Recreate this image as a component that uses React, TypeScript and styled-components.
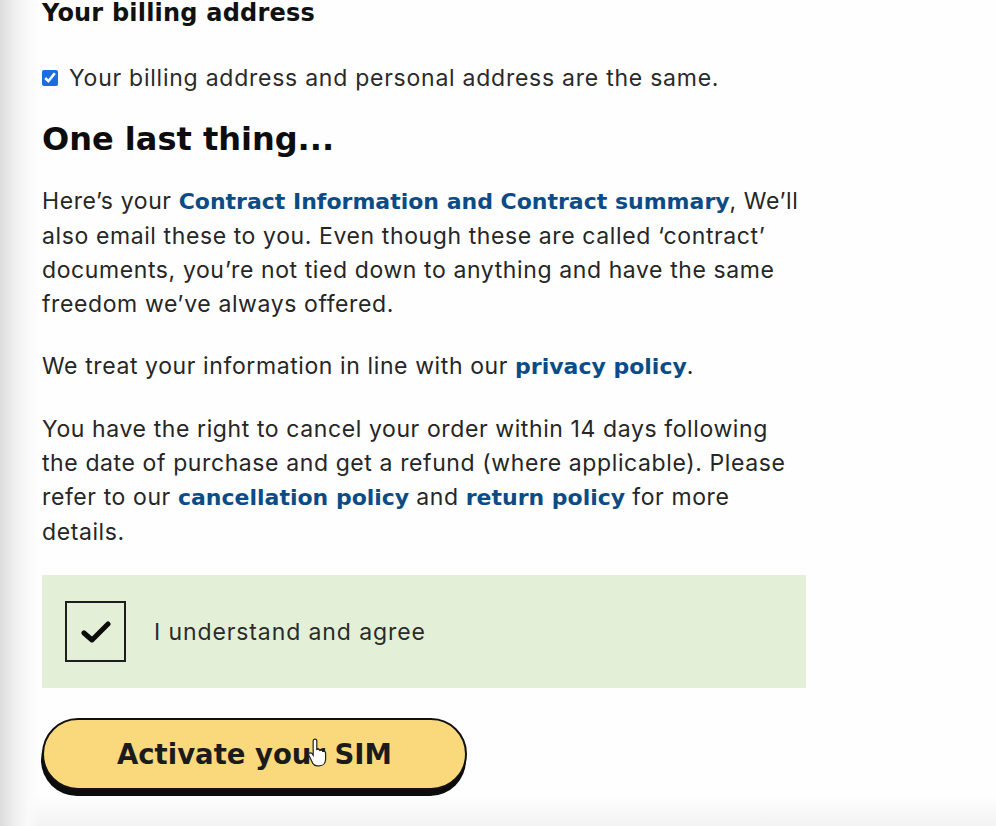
import { styled, createGlobalStyle } from 'styled-components';

const Global = createGlobalStyle`
    html, body {
        margin: 0;
        padding: 0;
    }
    body {
        font-family: Inter, 'Liberation Sans', sans-serif;
        color: #222;
        background: #fdfefd;
    }
`;

const heavy = `'DejaVu Sans', Inter, sans-serif`;

const S = {
    Page: styled.div`
        min-height: 826px;
        box-sizing: border-box;
        background:
            linear-gradient(to right, #dcdcdc 0, #eeeeee 14px, #fafafa 28px, rgba(253, 254, 253, 0) 40px),
            linear-gradient(to bottom, rgba(253, 254, 253, 0) 795px, #f3f3f3 826px),
            #fdfefd;
        padding-left: 42px;
    `,
    Column: styled.div`
        width: 764px;
        display: flex;
        flex-direction: column;
    `,
    SubHeading: styled.h3`
        margin: 0;
        font-family: ${heavy};
        font-size: 24px;
        letter-spacing: 0.2px;
        line-height: 26px;
        font-weight: 700;
        color: #111;
    `,
    SameRow: styled.label`
        margin-top: 35px;
        display: flex;
        align-items: center;
        gap: 11px;
        font-size: 23px;
        letter-spacing: 0.75px;
        line-height: 34px;
        color: #2a2a2a;

        input {
            margin: 0;
            width: 16px;
            height: 16px;
            accent-color: #1b6ee0;
        }
    `,
    Heading: styled.h2`
        margin: 24px 0 0;
        font-family: ${heavy};
        font-size: 32px;
        line-height: 40px;
        font-weight: 700;
        color: #0d0d0d;
    `,
    Para: styled.p<{ $gap: number }>`
        margin: ${(p) => p.$gap}px 0 0;
        font-size: 23px;
        letter-spacing: 0.6px;
        line-height: 34px;
        color: #262626;
    `,
    Link: styled.a`
        font-family: ${heavy};
        font-size: 22px;
        letter-spacing: 0;
        color: #0b4c86;
        font-weight: 700;
        text-decoration: none;
    `,
    AgreeBox: styled.label`
        margin-top: 26px;
        height: 113px;
        box-sizing: border-box;
        background: #e3f0d7;
        display: flex;
        align-items: center;
        padding-left: 23px;
        gap: 28px;
        font-size: 23px;
        letter-spacing: 0.9px;
        color: #2b2b2b;
    `,
    Tick: styled.span`
        width: 61px;
        height: 61px;
        box-sizing: border-box;
        border: 2px solid #1e1e1e;
        display: grid;
        place-items: center;
    `,
    ButtonWrap: styled.div`
        margin-top: 30px;
        position: relative;
        width: 425px;
    `,
    Button: styled.button`
        width: 425px;
        height: 72px;
        border-radius: 36px;
        border: 2px solid #111;
        background: #fad97d;
        box-shadow: -1px 6px 0 #0c0c0c;
        font-family: ${heavy};
        font-size: 27.5px;
        font-weight: 700;
        color: #1b1b1b;
        cursor: pointer;
    `,
    Cursor: styled.svg`
        position: absolute;
        left: 265px;
        top: 20px;
        pointer-events: none;
    `,
};

export default function App() {
    return (
        <>
            <Global />
            <S.Page>
                <S.Column>
                    <S.SubHeading>Your billing address</S.SubHeading>
                    <S.SameRow>
                        <input type="checkbox" defaultChecked />
                        Your billing address and personal address are the same.
                    </S.SameRow>
                    <S.Heading>One last thing...</S.Heading>
                    <S.Para $gap={25}>
                        Here’s your <S.Link href="#">Contract Information and Contract summary</S.Link>, We’ll also
                        email these to you. Even though these are called ‘contract’ documents, you’re not tied down to
                        anything and have the same freedom we’ve always offered.
                    </S.Para>
                    <S.Para $gap={28}>
                        We treat your information in line with our <S.Link href="#">privacy policy</S.Link>.
                    </S.Para>
                    <S.Para $gap={28}>
                        You have the right to cancel your order within 14 days following the date of purchase and get
                        a refund (where applicable). Please refer to our{' '}
                        <S.Link href="#">cancellation policy</S.Link> and <S.Link href="#">return policy</S.Link> for
                        more details.
                    </S.Para>
                    <S.AgreeBox>
                        <S.Tick>
                            <svg width="30" height="24" viewBox="0 0 30 24">
                                <path
                                    d="M3 13 L11 20 L27 4"
                                    fill="none"
                                    stroke="#0b0b0b"
                                    strokeWidth="5"
                                    strokeLinecap="round"
                                    strokeLinejoin="round"
                                />
                            </svg>
                        </S.Tick>
                        I understand and agree
                    </S.AgreeBox>
                    <S.ButtonWrap>
                        <S.Button type="button">Activate your SIM</S.Button>
                        <S.Cursor width="22" height="29" viewBox="0 0 18 24">
                            <path
                                d="M5 2.5c0-1 .7-1.6 1.5-1.6S8 1.5 8 2.5v7l1-.2c.8-.1 1.4.4 1.5 1l.9-.2c.8-.1 1.4.4 1.5 1l.8-.1c.9-.1 1.6.5 1.6 1.4v5.2c0 3-2 5.4-5.3 5.4H8.3c-1.6 0-2.8-.7-3.6-2L1.4 14.3c-.5-.9 0-1.8.9-2 .7-.2 1.3.1 1.8.7L5 14.3z"
                                fill="#fff"
                                stroke="#222"
                                strokeWidth="1"
                            />
                        </S.Cursor>
                    </S.ButtonWrap>
                </S.Column>
            </S.Page>
        </>
    );
}
